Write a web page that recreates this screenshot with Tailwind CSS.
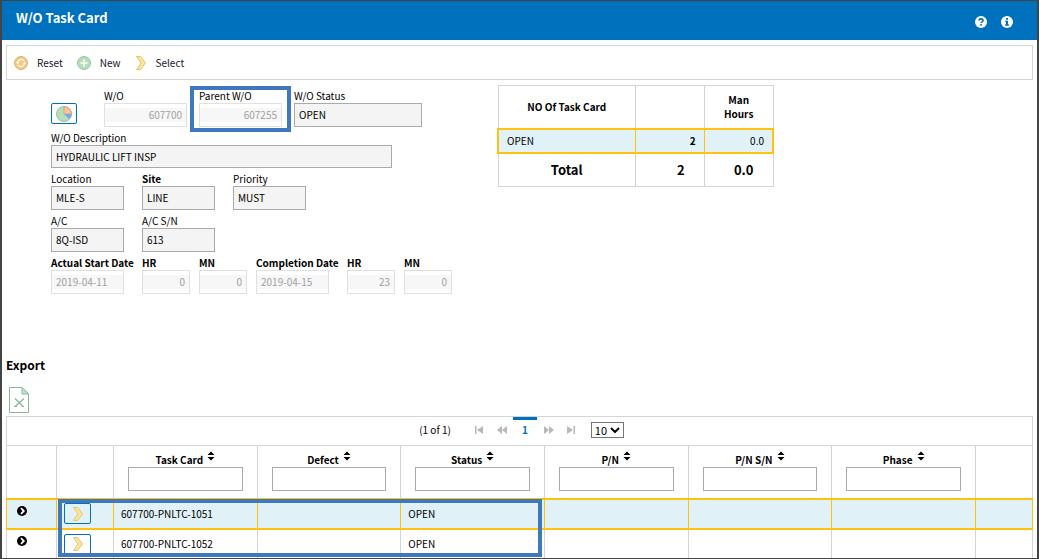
<!DOCTYPE html>
<html lang="en">
<head>
  <meta charset="UTF-8">
  <meta name="viewport" content="width=device-width, initial-scale=1.0">
  <title>W/O Task Card</title>
  <script src="https://cdn.jsdelivr.net/npm/@tailwindcss/browser@4"></script>
</head>
<body class="bg-white font-['Noto_Sans_CJK_SC','Open_Sans',sans-serif] text-[10px] leading-[14px] text-black">
  <!-- shared icons -->
  <svg class="hidden">
    <symbol id="chevron" viewBox="0 0 12 16">
      <path d="M1.5 1.5h4L10.5 8l-5 6.500h-4L6 8z" fill="#fbe69a" stroke="#e3c26c" stroke-width="1"/>
    </symbol>
    <symbol id="sort" viewBox="0 0 8 10">
      <path d="M4 0.500L7.500 4h-7zM4 9.500L0.500 6h7z" fill="#000"/>
    </symbol>
    <symbol id="expand" viewBox="0 0 10 10">
      <circle cx="5" cy="5" r="5" fill="#000"/>
      <path d="M4 2.200L6.800 5 4 7.800" fill="none" stroke="#fff" stroke-width="1.800"/>
    </symbol>
  </svg>

  <div class="h-screen overflow-hidden border-y border-x-2 border-[#444]">
    <header class="flex h-[39px] justify-between bg-[#0071bc] pr-6 pl-[14px] text-white">
      <h1 class="pt-[7px] text-[13px] leading-5 font-bold">W/O Task Card</h1>
      <div class="flex items-center gap-[14px] pt-[2px]">
        <button type="button" aria-label="Help">
          <svg class="size-3" viewBox="0 0 12 12">
            <circle cx="6" cy="6" r="6" fill="#fff"/>
            <path d="M4 4.600C4.100 3.300 5 2.900 6 2.900s2 .6 2 1.600c0 1.300-1.900 1.300-1.900 2.500" fill="none" stroke="#0071bc" stroke-width="1.600"/>
            <rect x="5.200" y="8" width="1.700" height="1.600" fill="#0071bc"/>
          </svg>
        </button>
        <button type="button" aria-label="Information">
          <svg class="size-3" viewBox="0 0 12 12">
            <circle cx="6" cy="6" r="6" fill="#fff"/>
            <path d="M5 2h2v1.700H5zM4.200 4.700H7v3.600h.9v1.400H4.200V8.300H5V6h-.8z" fill="#0071bc"/>
          </svg>
        </button>
      </div>
    </header>

    <main class="px-1 pt-[5px]">
      <!-- toolbar -->
      <nav class="flex h-[35px] items-center gap-[14px] border border-[#d5d5d5] px-[7px] text-[#14142b]">
        <button type="button" class="flex items-center gap-[9px]">
          <svg class="size-[14px]" viewBox="0 0 14 14">
            <circle cx="7" cy="7" r="6.500" fill="#f7c97f" stroke="#d9b27a"/>
            <path d="M3.500 6.500A3.600 3.600 0 0 1 10 5M10.500 7.500A3.600 3.600 0 0 1 4 9" fill="none" stroke="#fff" stroke-width="1.300"/>
            <path d="M2 6h3.200L3.600 8.200zM12 8H8.800l1.600-2.200z" fill="#fff"/>
          </svg>
          Reset
        </button>
        <button type="button" class="flex items-center gap-[9px]">
          <svg class="size-[14px]" viewBox="0 0 14 14">
            <circle cx="7" cy="7" r="6.500" fill="#b5dfb9" stroke="#98c3a1"/>
            <path d="M7 3.500v7M3.500 7h7" stroke="#fff" stroke-width="1.600"/>
          </svg>
          New
        </button>
        <button type="button" class="flex items-center gap-[9px]">
          <svg class="h-4 w-3"><use href="#chevron"/></svg>
          Select
        </button>
      </nav>

      <div class="flex items-start pl-[45px]">
        <!-- work order details -->
        <form class="flex w-[447px] flex-col gap-1 pt-[9px]">
          <div class="flex items-end gap-3">
            <div class="w-[41px] pb-[3px]">
              <button type="button" aria-label="Chart" class="flex h-[21px] w-[26px] items-center justify-center rounded-[2px] border border-[#0071bc]">
                <svg class="size-4" viewBox="0 0 16 16">
                  <circle cx="8" cy="8" r="7.500" fill="#b5dfb9" stroke="#9cbfa5"/>
                  <path d="M8 8V.5A7.500 7.500 0 0 1 15.500 8z" fill="#fdc49a" stroke="#d8a184"/>
                  <path d="M8 8h7.500a7.500 7.500 0 0 1-2.200 5.300z" fill="#7ea6e8"/>
                </svg>
              </button>
            </div>
            <div class="w-[83px]">
              <label for="wo" class="block">W/O</label>
              <input id="wo" disabled value="607700" class="block h-6 w-full border border-[#e0e0e0] bg-[linear-gradient(#fff_4px,#f7f7f7_4px,#f7f7f7_18px,#fff_18px)] px-1 pb-[2px] text-right text-[#a0a0a0]">
            </div>
            <div class="relative w-[83px]">
              <label for="parent" class="block">Parent W/O</label>
              <input id="parent" disabled value="607255" class="block h-6 w-full border border-[#e0e0e0] bg-[linear-gradient(#fff_4px,#f7f7f7_4px,#f7f7f7_18px,#fff_18px)] px-1 pb-[2px] text-right text-[#a0a0a0]">
              <div class="pointer-events-none absolute -inset-x-[9px] -top-[3px] -bottom-[5px] border-4 border-[#3f78bc]"></div>
            </div>
            <div class="w-32">
              <label for="status" class="block">W/O Status</label>
              <input id="status" readonly value="OPEN" class="block h-6 w-full border border-[#a9a9ae] bg-[#f4f4f4] px-1 pb-[2px]">
            </div>
          </div>
          <div class="w-[341px]">
            <label for="desc" class="block">W/O Description</label>
            <input id="desc" readonly value="HYDRAULIC LIFT INSP" class="block h-[23px] w-full border border-[#a9a9ae] bg-[#f4f4f4] px-1">
          </div>
          <div class="flex gap-[18px]">
            <div class="w-[73px]">
              <label for="location" class="block">Location</label>
              <input id="location" readonly value="MLE-S" class="block h-6 w-full border border-[#a9a9ae] bg-[#f4f4f4] px-1 pb-[2px]">
            </div>
            <div class="w-[73px]">
              <label for="site" class="block font-bold">Site</label>
              <input id="site" readonly value="LINE" class="block h-6 w-full border border-[#a9a9ae] bg-[#f4f4f4] px-1 pb-[2px]">
            </div>
            <div class="w-[73px]">
              <label for="priority" class="block">Priority</label>
              <input id="priority" readonly value="MUST" class="block h-6 w-full border border-[#a9a9ae] bg-[#f4f4f4] px-1 pb-[2px]">
            </div>
          </div>
          <div class="flex gap-[18px]">
            <div class="w-[73px]">
              <label for="ac" class="block">A/C</label>
              <input id="ac" readonly value="8Q-ISD" class="block h-6 w-full border border-[#a9a9ae] bg-[#f4f4f4] px-1 pb-[2px]">
            </div>
            <div class="w-[73px]">
              <label for="acsn" class="block">A/C S/N</label>
              <input id="acsn" readonly value="613" class="block h-6 w-full border border-[#a9a9ae] bg-[#f4f4f4] px-1 pb-[2px]">
            </div>
          </div>
          <div class="flex gap-[9px]">
            <div class="w-[82px]">
              <label for="start" class="block font-bold whitespace-nowrap">Actual Start Date</label>
              <input id="start" disabled value="2019-04-11" class="block h-6 w-[73px] border border-[#e0e0e0] bg-[linear-gradient(#fff_4px,#f7f7f7_4px,#f7f7f7_18px,#fff_18px)] px-1 pb-[2px] text-[#a0a0a0]">
            </div>
            <div class="w-12">
              <label for="starthr" class="block font-bold">HR</label>
              <input id="starthr" disabled value="0" class="block h-6 w-full border border-[#e0e0e0] bg-[linear-gradient(#fff_4px,#f7f7f7_4px,#f7f7f7_18px,#fff_18px)] px-1 pb-[2px] text-right text-[#a0a0a0]">
            </div>
            <div class="w-12">
              <label for="startmn" class="block font-bold">MN</label>
              <input id="startmn" disabled value="0" class="block h-6 w-full border border-[#e0e0e0] bg-[linear-gradient(#fff_4px,#f7f7f7_4px,#f7f7f7_18px,#fff_18px)] px-1 pb-[2px] text-right text-[#a0a0a0]">
            </div>
            <div class="w-[82px]">
              <label for="end" class="block font-bold whitespace-nowrap">Completion Date</label>
              <input id="end" disabled value="2019-04-15" class="block h-6 w-[73px] border border-[#e0e0e0] bg-[linear-gradient(#fff_4px,#f7f7f7_4px,#f7f7f7_18px,#fff_18px)] px-1 pb-[2px] text-[#a0a0a0]">
            </div>
            <div class="w-12">
              <label for="endhr" class="block font-bold">HR</label>
              <input id="endhr" disabled value="23" class="block h-6 w-full border border-[#e0e0e0] bg-[linear-gradient(#fff_4px,#f7f7f7_4px,#f7f7f7_18px,#fff_18px)] px-1 pb-[2px] text-right text-[#a0a0a0]">
            </div>
            <div class="w-12">
              <label for="endmn" class="block font-bold">MN</label>
              <input id="endmn" disabled value="0" class="block h-6 w-full border border-[#e0e0e0] bg-[linear-gradient(#fff_4px,#f7f7f7_4px,#f7f7f7_18px,#fff_18px)] px-1 pb-[2px] text-right text-[#a0a0a0]">
            </div>
          </div>
        </form>

        <!-- task card totals -->
        <table class="mt-[5px] -ml-px w-[277px] table-fixed border-collapse">
          <thead>
            <tr class="h-[43px]">
              <th class="w-1/2 border border-[#d5d5d5] font-bold">NO Of Task Card</th>
              <th class="w-1/4 border border-[#d5d5d5]"></th>
              <th class="w-1/4 border border-[#d5d5d5] px-4 font-bold">Man Hours</th>
            </tr>
          </thead>
          <tbody>
            <tr class="h-6 border-2 border-[#ffc20e] bg-[#e1f1f8]">
              <td class="border-r border-[#ffc20e] px-2">OPEN</td>
              <td class="border-r border-[#ffc20e] px-2 text-right font-bold">2</td>
              <td class="px-2 text-right">0.0</td>
            </tr>
          </tbody>
          <tfoot class="text-[13px]">
            <tr class="h-[34px]">
              <td class="border border-[#d5d5d5] text-center font-bold">Total</td>
              <td class="border border-[#d5d5d5] pr-[19px] text-right font-bold">2</td>
              <td class="border border-[#d5d5d5] pr-[19px] text-right font-bold">0.0</td>
            </tr>
          </tfoot>
        </table>
      </div>

      <section class="pt-[63px]">
        <h2 class="text-xs leading-4 font-bold">Export</h2>
        <button type="button" aria-label="Export to Excel" class="mt-[14px] ml-[3px] block">
          <svg class="h-[26px] w-5" viewBox="0 0 20 26">
            <path d="M.5.5H13L19.500 7v18.500H.5z" fill="#fff" stroke="#86b89a"/>
            <path d="M13 .5V7h6.500z" fill="#c3e6c9" stroke="#86b89a"/>
            <path d="M6 11.500l8 8M15 11.500l-9 8M5 19.500h3M13 19.500h2" fill="none" stroke="#86b89a" stroke-width="1.200"/>
          </svg>
        </button>
      </section>

      <!-- task card list -->
      <section class="relative mt-[3px]">
        <div class="flex h-[29px] items-stretch justify-center border border-b-0 border-[#d5d5d5] pb-[3px] pl-1">
          <span class="mr-4 self-center">(1 of 1)</span>
          <button type="button" aria-label="First page" class="w-6"><svg class="mx-auto h-2 w-[10px]" viewBox="0 0 10 8"><path d="M1 0h1.500v8H1zM9 0v8L3 4z" fill="#b8b8b8"/></svg></button>
          <button type="button" aria-label="Previous page" class="w-[22px]"><svg class="mx-auto h-2 w-[10px]" viewBox="0 0 10 8"><path d="M5 0v8L0 4zM10 0v8L5 4z" fill="#b8b8b8"/></svg></button>
          <button type="button" class="w-6 border-t-[3px] border-[#0071bc] pb-[3px] font-bold text-[#0071bc]">1</button>
          <button type="button" aria-label="Next page" class="w-6"><svg class="mx-auto h-2 w-[10px]" viewBox="0 0 10 8"><path d="M0 0v8l5-4zM5 0v8l5-4z" fill="#b8b8b8"/></svg></button>
          <button type="button" aria-label="Last page" class="w-5"><svg class="mx-auto h-2 w-[10px]" viewBox="0 0 10 8"><path d="M1 0v8l6-4zM7.500 0H9v8H7.500z" fill="#b8b8b8"/></svg></button>
          <div class="relative ml-[10px] self-center">
            <select aria-label="Rows per page" class="block h-4 w-[33px] appearance-none border border-[#767676] bg-white pl-[3px] text-[11px] leading-[14px]">
              <option>10</option>
            </select>
            <svg class="pointer-events-none absolute top-[5px] right-1 h-[6px] w-[10px]" viewBox="0 0 10 6"><path d="M1 1l4 4 4-4" fill="none" stroke="#000" stroke-width="2"/></svg>
          </div>
        </div>

        <table class="w-full table-fixed border-collapse">
          <colgroup>
            <col class="w-[50px]"><col class="w-[57px]"><col><col><col><col><col><col><col class="w-[57px]">
          </colgroup>
          <thead>
            <tr class="h-[53px]">
              <th class="border border-[#d5d5d5]"></th>
              <th class="border border-[#d5d5d5]"></th>
              <th class="border border-[#d5d5d5] px-[14px] pb-[2px]">
                <div class="flex justify-center gap-1"><label for="f1" class="pt-[2px] font-bold">Task Card</label><svg class="h-[10px] w-2"><use href="#sort"/></svg></div>
                <input id="f1" class="block h-6 w-full border border-[#a9a9ae] px-1">
              </th>
              <th class="border border-[#d5d5d5] px-[14px] pb-[2px]">
                <div class="flex justify-center gap-1"><label for="f2" class="pt-[2px] font-bold">Defect</label><svg class="h-[10px] w-2"><use href="#sort"/></svg></div>
                <input id="f2" class="block h-6 w-full border border-[#a9a9ae] px-1">
              </th>
              <th class="border border-[#d5d5d5] px-[14px] pb-[2px]">
                <div class="flex justify-center gap-1"><label for="f3" class="pt-[2px] font-bold">Status</label><svg class="h-[10px] w-2"><use href="#sort"/></svg></div>
                <input id="f3" class="block h-6 w-full border border-[#a9a9ae] px-1">
              </th>
              <th class="border border-[#d5d5d5] px-[14px] pb-[2px]">
                <div class="flex justify-center gap-1"><label for="f4" class="pt-[2px] font-bold">P/N</label><svg class="h-[10px] w-2"><use href="#sort"/></svg></div>
                <input id="f4" class="block h-6 w-full border border-[#a9a9ae] px-1">
              </th>
              <th class="border border-[#d5d5d5] px-[14px] pb-[2px]">
                <div class="flex justify-center gap-1"><label for="f5" class="pt-[2px] font-bold">P/N S/N</label><svg class="h-[10px] w-2"><use href="#sort"/></svg></div>
                <input id="f5" class="block h-6 w-full border border-[#a9a9ae] px-1">
              </th>
              <th class="border border-[#d5d5d5] px-[14px] pb-[2px]">
                <div class="flex justify-center gap-1"><label for="f6" class="pt-[2px] font-bold">Phase</label><svg class="h-[10px] w-2"><use href="#sort"/></svg></div>
                <input id="f6" class="block h-6 w-full border border-[#a9a9ae] px-1">
              </th>
              <th class="border border-[#d5d5d5]"></th>
            </tr>
          </thead>
          <tbody>
            <tr class="h-[30px] border-y-2 border-[#ffc20e] bg-[#e1f1f8]">
              <td class="border-x border-[#ffc20e] pb-[6px] pl-[10px]"><button type="button" aria-label="Expand 607700-PNLTC-1051" class="block"><svg class="size-[10px]"><use href="#expand"/></svg></button></td>
              <td class="border-x border-[#ffc20e] pl-[7px]"><button type="button" aria-label="Select 607700-PNLTC-1051" class="flex h-[21px] w-[27px] items-center justify-center rounded-[2px] border border-[#0071bc]"><svg class="h-4 w-3"><use href="#chevron"/></svg></button></td>
              <td class="border-x border-[#ffc20e] px-[7px]">607700-PNLTC-1051</td>
              <td class="border-x border-[#ffc20e]"></td>
              <td class="border-x border-[#ffc20e] px-[7px]">OPEN</td>
              <td class="border-x border-[#ffc20e]"></td>
              <td class="border-x border-[#ffc20e]"></td>
              <td class="border-x border-[#ffc20e]"></td>
              <td class="border-x border-[#ffc20e]"></td>
            </tr>
            <tr class="h-[30px]">
              <td class="border-x border-[#d5d5d5] pb-[6px] pl-[10px]"><button type="button" aria-label="Expand 607700-PNLTC-1052" class="block"><svg class="size-[10px]"><use href="#expand"/></svg></button></td>
              <td class="border-x border-[#d5d5d5] pl-[7px]"><button type="button" aria-label="Select 607700-PNLTC-1052" class="flex h-[21px] w-[27px] items-center justify-center rounded-[2px] border border-[#0071bc]"><svg class="h-4 w-3"><use href="#chevron"/></svg></button></td>
              <td class="border-x border-[#d5d5d5] px-[7px]">607700-PNLTC-1052</td>
              <td class="border-x border-[#d5d5d5]"></td>
              <td class="border-x border-[#d5d5d5] px-[7px]">OPEN</td>
              <td class="border-x border-[#d5d5d5]"></td>
              <td class="border-x border-[#d5d5d5]"></td>
              <td class="border-x border-[#d5d5d5]"></td>
              <td class="border-x border-[#d5d5d5]"></td>
            </tr>
          </tbody>
        </table>
        <!-- callout around the two task cards -->
        <div class="pointer-events-none absolute top-[83px] left-[52px] h-[58px] w-[484px] border-4 border-[#3f78bc]"></div>
      </section>
    </main>
  </div>
</body>
</html>
